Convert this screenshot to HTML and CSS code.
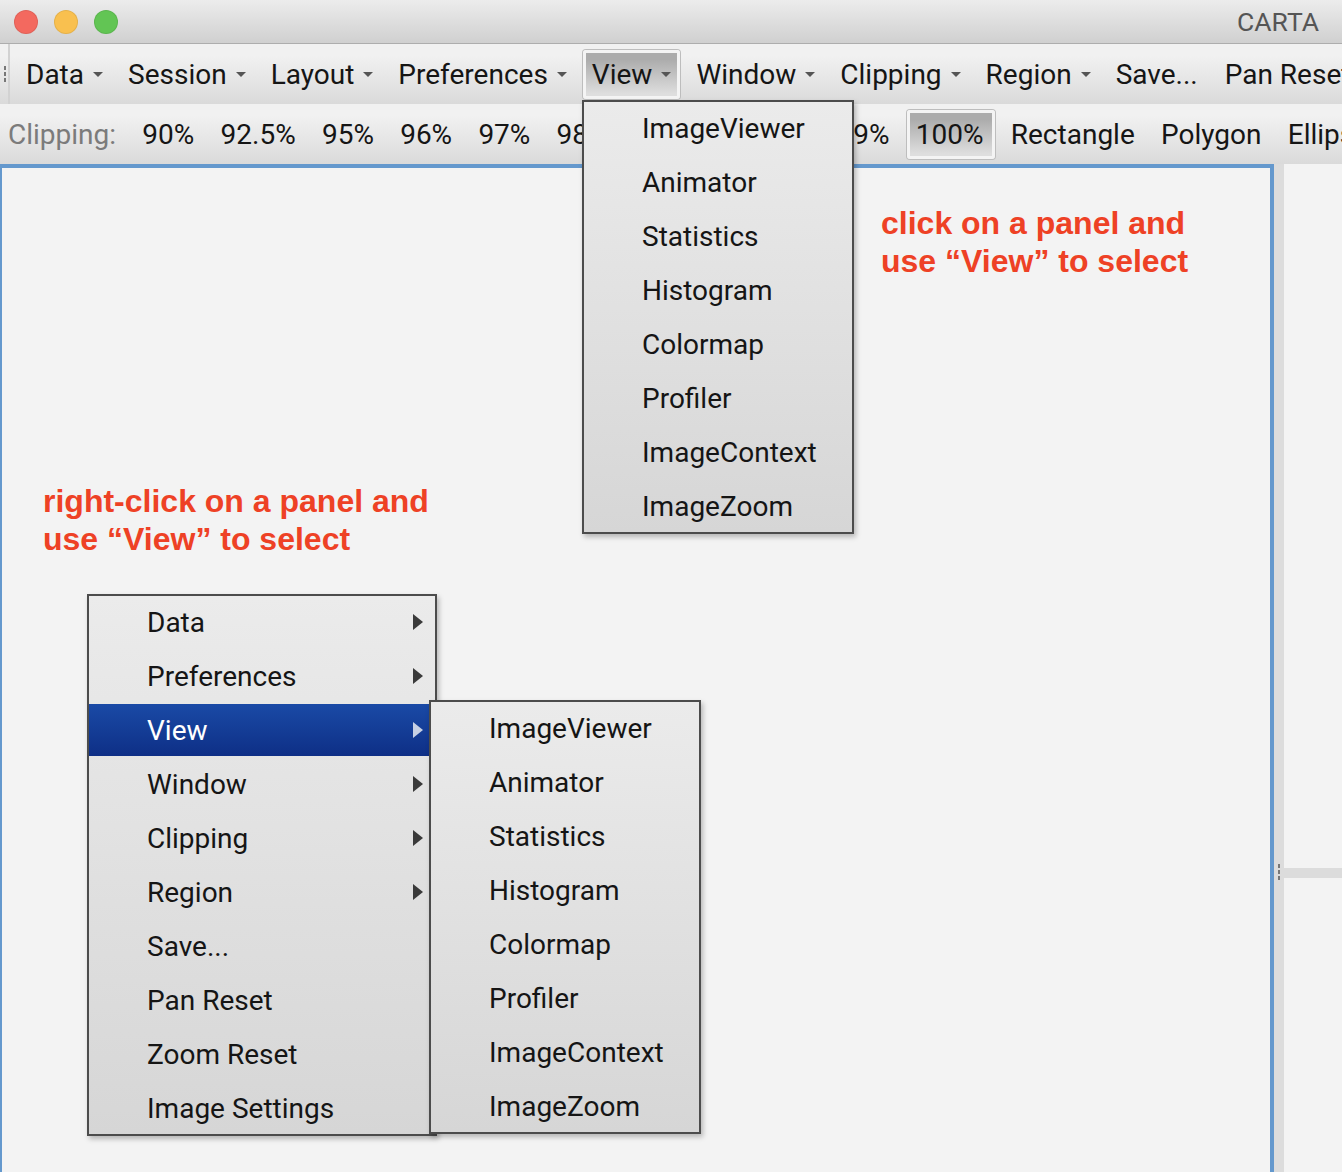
FILE: index.html
```html
<!DOCTYPE html>
<html lang="en">
<head>
    <meta charset="UTF-8">
    <title>CARTA</title>
    <link rel="stylesheet" href="styles.css">
</head>
<body>
    <div class="window">
        <!-- Title bar -->
        <div class="title-bar">
            <div class="lights">
                <span class="light red"></span>
                <span class="light yellow"></span>
                <span class="light green"></span>
            </div>
            <span class="app-name">CARTA</span>
        </div>

        <!-- Main menu -->
        <div class="menu-bar">
            <div class="grip"><i></i><i></i><i></i></div>
            <div class="bar-btn">Data<span class="caret"></span></div>
            <div class="bar-btn">Session<span class="caret"></span></div>
            <div class="bar-btn">Layout<span class="caret"></span></div>
            <div class="bar-btn">Preferences<span class="caret"></span></div>
            <div class="bar-btn active">View<span class="caret"></span></div>
            <div class="bar-btn">Window<span class="caret"></span></div>
            <div class="bar-btn">Clipping<span class="caret"></span></div>
            <div class="bar-btn">Region<span class="caret"></span></div>
            <div class="bar-btn save-btn">Save...</div>
            <div class="bar-btn">Pan Reset</div>
        </div>

        <!-- Clipping toolbar -->
        <div class="tool-bar">
            <span class="tool-label">Clipping:</span>
            <div class="tool-btn">90%</div>
            <div class="tool-btn">92.5%</div>
            <div class="tool-btn">95%</div>
            <div class="tool-btn">96%</div>
            <div class="tool-btn">97%</div>
            <div class="tool-btn">98%</div>
            <div class="tool-btn">98.5%</div>
            <div class="tool-btn">99%</div>
            <div class="tool-btn">99.9%</div>
            <div class="tool-btn active">100%</div>
            <div class="tool-btn">Rectangle</div>
            <div class="tool-btn">Polygon</div>
            <div class="tool-btn">Ellipse</div>
        </div>

        <div class="workspace">
            <div class="panel">
                <p class="note note-top">click on a panel and<br>use “View” to select</p>
                <p class="note note-left">right-click on a panel and<br>use “View” to select</p>
            </div>
            <div class="side">
                <div class="side-top"></div>
                <div class="side-divider">
                    <div class="handle"><i></i><i></i><i></i></div>
                </div>
            </div>
        </div>

        <!-- Menus that lie over the page -->
        <ul class="menu view-menu">
            <li>ImageViewer</li>
            <li>Animator</li>
            <li>Statistics</li>
            <li>Histogram</li>
            <li>Colormap</li>
            <li>Profiler</li>
            <li>ImageContext</li>
            <li>ImageZoom</li>
        </ul>

        <ul class="menu context-menu">
            <li class="more">Data</li>
            <li class="more">Preferences</li>
            <li class="more selected">View</li>
            <li class="more">Window</li>
            <li class="more">Clipping</li>
            <li class="more">Region</li>
            <li>Save...</li>
            <li>Pan Reset</li>
            <li>Zoom Reset</li>
            <li>Image Settings</li>
        </ul>

        <ul class="menu sub-menu">
            <li>ImageViewer</li>
            <li>Animator</li>
            <li>Statistics</li>
            <li>Histogram</li>
            <li>Colormap</li>
            <li>Profiler</li>
            <li>ImageContext</li>
            <li>ImageZoom</li>
        </ul>
    </div>
</body>
</html>
```

FILE: styles.css
```css
* {
    box-sizing: border-box;
}

html, body {
    margin: 0;
    padding: 0;
    height: 100%;
    overflow: hidden;
}

body {
    font-family: Roboto, "Liberation Sans", sans-serif;
    font-size: 28px;
    color: #151515;
    background-color: #f3f3f3;
}

.window {
    position: relative;
    display: flex;
    flex-direction: column;
    width: 1342px;
    height: 1172px;
    overflow: hidden;
}

/* Title bar */
.title-bar {
    display: flex;
    align-items: center;
    justify-content: space-between;
    flex: 0 0 44px;
    padding: 0 23px 0 14px;
    background: linear-gradient(#ececec, #d0d0d0);
    border-bottom: 1px solid #adadad;
}

.lights {
    display: flex;
    gap: 16px;
}

.light {
    width: 24px;
    height: 24px;
    border-radius: 50%;
    border: 1px solid rgba(0, 0, 0, 0.08);
}

.red { background-color: #f3695f; }
.yellow { background-color: #f9c04f; }
.green { background-color: #62c554; }

.app-name {
    font-size: 26.5px;
    color: #555;
}

/* Main menu */
.menu-bar, .tool-bar {
    display: flex;
    align-items: center;
    flex: 0 0 60px;
    white-space: nowrap;
    overflow: hidden;
    background: linear-gradient(#f1f1f1 20%, #dadada);
}

.menu-bar {
    gap: 7px;
    padding-left: 3px;
}

.grip {
    display: flex;
    flex-direction: column;
    justify-content: center;
    flex: none;
    gap: 2px;
    width: 7px;
    height: 60px;
    border-right: 2px solid #d2d2d2;
}

.grip i, .handle i {
    display: block;
    width: 2px;
    height: 4px;
    background-color: #777;
}

.grip i {
    margin-left: 1px;
}

.bar-btn, .tool-btn {
    display: flex;
    align-items: center;
    flex: none;
    height: 49px;
    border: 3px solid transparent;
    border-radius: 3px;
}

.bar-btn {
    padding: 0 6px;
}

.save-btn {
    margin-right: 2px;
}

.caret {
    width: 0;
    height: 0;
    margin-left: 9px;
    margin-top: 1px;
    border-left: 5px solid transparent;
    border-right: 5px solid transparent;
    border-top: 5px solid #555;
}

.active {
    background: linear-gradient(#acacac 15%, #dedede 95%) padding-box;
    border-color: #f4f4f4;
    box-shadow: 0 0 0 1px #bdbdbd;
}

.tool-bar {
    gap: 6.25px;
    padding-left: 8px;
}

.tool-label {
    flex: none;
    color: #7b7b7b;
    margin-right: 10px;
}

.tool-btn {
    padding: 0 7px;
}

.tool-btn.active {
    margin: 0 0 0 1px;
    padding: 0 8px 0 6px;
}

/* Workspace */
.workspace {
    display: flex;
    flex: 1;
    min-height: 0;
}

.panel {
    position: relative;
    flex: 0 0 1274px;
    border: 4px solid #6498cd;
    border-left-width: 2px;
    border-bottom: 0;
    background-color: #f3f3f3;
}

.side {
    flex: 1;
    border-left: 10px solid #dcdcdc;
}

.side-top {
    height: 704px;
}

.side-divider {
    position: relative;
    height: 10px;
    background-color: #dcdcdc;
}

.handle {
    position: absolute;
    left: -6px;
    top: -4px;
    display: flex;
    flex-direction: column;
    gap: 2px;
}

/* Notes on the panel */
.note {
    position: absolute;
    margin: 0;
    font-family: "Liberation Sans", Arial, sans-serif;
    font-weight: 700;
    font-size: 32px;
    line-height: 38px;
    color: #ee4125;
}

.note-top {
    left: 879px;
    top: 36px;
}

.note-left {
    left: 41px;
    top: 314px;
}

/* Popup menus */
.menu {
    position: absolute;
    margin: 0;
    padding: 0 0 0 58px;
    list-style: none;
    border: 2px solid #4c4c4c;
    background: linear-gradient(#ebebeb, #d6d6d6);
    box-shadow: 2px 3px 5px rgba(0, 0, 0, 0.25);
}

.menu li {
    position: relative;
    height: 54px;
    line-height: 54px;
}

.menu li:last-child {
    height: 52px;
}

.view-menu {
    left: 582px;
    top: 100px;
    width: 272px;
}

.context-menu {
    left: 87px;
    top: 594px;
    width: 350px;
}

.sub-menu {
    left: 429px;
    top: 700px;
    width: 272px;
}

.more::after {
    content: "";
    position: absolute;
    right: 12px;
    top: 18px;
    border-top: 8px solid transparent;
    border-bottom: 8px solid transparent;
    border-left: 10px solid #3a3a3a;
}

.context-menu .selected {
    margin-left: -58px;
    margin-bottom: 2px;
    padding-left: 58px;
    height: 52px;
    color: #fff;
    background: linear-gradient(#1a4aa6, #0e2f86);
}

.selected.more::after {
    border-left-color: #c6d0e4;
}
```
